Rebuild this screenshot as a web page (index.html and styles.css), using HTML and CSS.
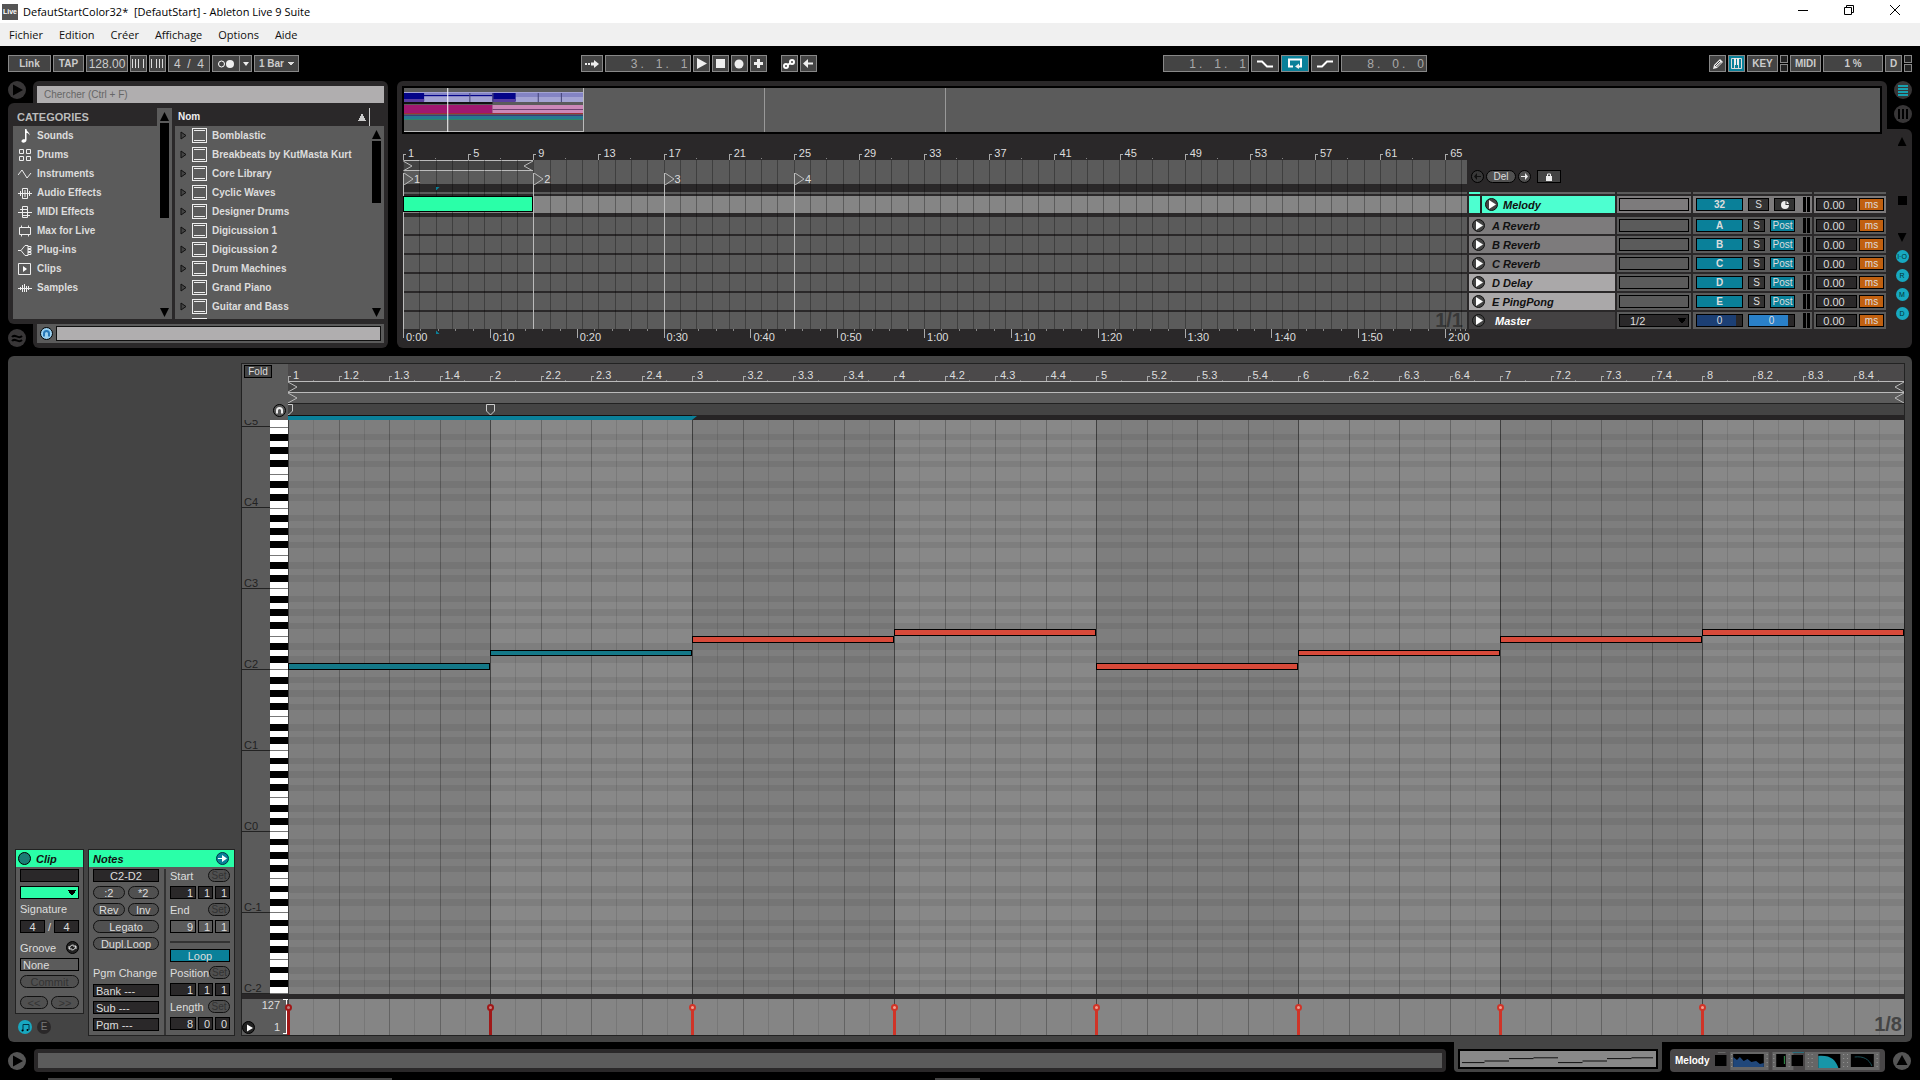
FILE: index.html
```
<!DOCTYPE html>
<html lang="fr">
	<head>
		<meta charset="utf-8">
		<title>DefautStartColor32* [DefautStart] - Ableton Live 9 Suite</title>
		<link rel="stylesheet" href="styles.css">
	</head>
	<body>
		<header class="titlebar">
			<span class="app-icon">Live</span>
			<span class="title">DefautStartColor32*&nbsp; [DefautStart] - Ableton Live 9 Suite</span>
			<div class="window-buttons">
				<button aria-label="Minimize"><svg width="12" height="12"><path d="M1 6.500h10"/></svg></button>
				<button aria-label="Restore"><svg width="12" height="12"><path d="M1.500 3.500h7v7h-7zM3.500 3.500v-2h7v7h-2"/></svg></button>
				<button aria-label="Close"><svg width="12" height="12"><path d="M1 1l10 10M11 1L1 11"/></svg></button>
			</div>
		</header>

		<nav class="menu">
			<a href="#">Fichier</a>
			<a href="#">Edition</a>
			<a href="#">Créer</a>
			<a href="#">Affichage</a>
			<a href="#">Options</a>
			<a href="#">Aide</a>
		</nav>

		<!-- transport -->
		<div class="transport">
			<div class="group tempo">
				<button class="tb w43">Link</button>
				<button class="tb w31">TAP</button>
				<input class="tb w42 num" value="128.00" aria-label="Tempo">
				<button class="tb w17" aria-label="Nudge down"><svg width="13" height="9"><path class="line" d="M.5 0v9M3.500 0v9M6.500 0v9M11.500 0v9"/></svg></button>
				<button class="tb w17" aria-label="Nudge up"><svg width="13" height="9"><path class="line" d="M.5 0v9M5.500 0v9M8.500 0v9M11.500 0v9"/></svg></button>
				<input class="tb w42 num" value="4 &nbsp;/ &nbsp;4" aria-label="Time signature">
				<div class="joined">
					<button class="tb w28" aria-label="Metronome"><svg width="18" height="10"><circle class="ring" cx="4.500" cy="5" r="3"/><circle cx="13" cy="5" r="4"/></svg></button>
					<button class="tb w12" aria-label="Metronome options"><svg width="6" height="4"><path d="M0 0h6L3 4z"/></svg></button>
				</div>
				<select class="tb w45 bar-select" aria-label="Quantization"><option>1 Bar</option></select>
			</div>

			<div class="group play">
				<button class="tb w22" aria-label="Follow"><svg width="14" height="9"><path d="M0 4h2v2H0zM3 4h2v2H3zM6 3.500h3V1l5 4-5 4V6.500H6z"/></svg></button>
				<div class="tb w86 counter"><span>3<i>.</i></span><span>1<i>.</i></span><span>1</span></div>
				<button class="tb w17" aria-label="Play"><svg width="11" height="11"><path d="M1 0l10 5.500L1 11z"/></svg></button>
				<button class="tb w17" aria-label="Stop"><svg width="9" height="9"><path d="M0 0h9v9H0z"/></svg></button>
				<button class="tb w17" aria-label="Record"><svg width="10" height="10"><circle cx="5" cy="5" r="4.500"/></svg></button>
				<button class="tb w17" aria-label="Overdub"><svg width="9" height="9"><path d="M3 0h3v3h3v3H6v3H3V6H0V3h3z"/></svg></button>
				<button class="tb w17 spaced" aria-label="Automation arm"><svg width="12" height="10"><circle class="ring2" cx="3" cy="7" r="2"/><circle class="ring2" cx="9" cy="3" r="2"/><path class="ring2" d="M4.500 6l3-2"/></svg></button>
				<button class="tb w17" aria-label="Re-enable automation"><svg width="10" height="9"><path d="M0 4.500L5 0v3.500h5v2H5V9z"/></svg></button>
			</div>

			<div class="group loop">
				<div class="tb w86 counter"><span>1<i>.</i></span><span>1<i>.</i></span><span>1</span></div>
				<button class="tb w28" aria-label="Punch in"><svg width="16" height="8"><path class="thick" d="M0 1.500h5l5 5h6"/></svg></button>
				<button class="tb w28 on" aria-label="Loop"><svg width="14" height="11"><path class="thick" d="M5 8.500H1v-7h12v7H9"/><path d="M7 8.500l4-3v5.500z"/></svg></button>
				<button class="tb w28" aria-label="Punch out"><svg width="16" height="8"><path class="thick" d="M0 6.500h5l5-5h6"/></svg></button>
				<div class="tb w86 counter"><span>8<i>.</i></span><span>0<i>.</i></span><span>0</span></div>
			</div>

			<div class="group status-group">
				<button class="tb w17" aria-label="Draw mode"><svg width="12" height="12"><path d="M1 11l1-4 6-6 3 3-6 6z"/><path class="cut" d="M3 8l5-5M4.500 9L9 4.500"/></svg></button>
				<button class="tb w17 on" aria-label="Computer MIDI keyboard"><svg width="11" height="11"><path class="line" d="M.5.5h10v10H.5zM3.500 0v11M7.500 0v11"/><path d="M3 0h2v7H3zM6 0h2v7H6z"/></svg></button>
				<button class="tb w31">KEY</button>
				<div class="leds"><i></i><i></i></div>
				<button class="tb w31">MIDI</button>
				<div class="tb w60">1 %</div>
				<button class="tb w17">D</button>
				<div class="leds"><i></i><i></i></div>
			</div>
		</div>

		<div class="upper">
			<!-- browser -->
			<section class="browser">
				<div class="browser-top">
					<button class="round" aria-label="Show browser"><svg width="18" height="18"><path d="M5 3.500l10 5.500-10 5.500z"/></svg></button>
					<div class="search-box"><input type="search" placeholder="Chercher (Ctrl + F)" aria-label="Chercher"></div>
				</div>
				<div class="browser-body">
					<div class="categories">
						<div class="cat-main">
							<h2>CATEGORIES</h2>
							<ul>
								<li><svg width="14" height="14"><path class="f" d="M7 0h1.500c0 3 3.500 3 3 6.500-.5-2-2-2.500-3-2.500v7c0 3-5 3.500-5 1.200C3.500 10.500 5.500 10 7 10.300z"/></svg>Sounds</li>
								<li><svg width="14" height="14"><path d="M1.500 1.500h4v4h-4zM8.500 1.500h4v4h-4zM1.500 8.500h4v4h-4zM8.500 8.500h4v4h-4z"/></svg>Drums</li>
								<li><svg width="14" height="14"><path d="M0 8l4-5 5 8 4-5"/></svg>Instruments</li>
								<li><svg width="14" height="14"><path d="M0 7.500h14M4.500 2.500h5v10h-5zM2.500 5v5M7 4v7M11.500 5v5"/></svg>Audio Effects</li>
								<li><svg width="14" height="14"><path d="M4.500 1.500h5v11h-5zM2 4.500h8M0 7.500h14M4 10.500h8"/></svg>MIDI Effects</li>
								<li><svg width="14" height="14"><path d="M1.500 3.500h11v7h-11zM3.500 1.500v2M10.500 1.500v2M3.500 10.500v2M10.500 10.500v2"/></svg>Max for Live</li>
								<li><svg width="14" height="14"><path d="M0 7.500h3l4-5h3v10H7l-4-5M10 3.500h3v2h-3M10 6.500h3v2h-3M10 9.500h3v2h-3"/></svg>Plug-ins</li>
								<li><svg width="14" height="14"><path d="M.5 1.500h12v11H.5z"/><path class="f" d="M5 4l4 3-4 3z"/></svg>Clips</li>
								<li><svg width="14" height="14"><path d="M0 7.500h14M2.500 6v3M4.500 4v7M6.500 3v8M8.500 5v6M10.500 5v4"/></svg>Samples</li>
							</ul>
						</div>
						<div class="scroll"><i class="up"></i><b></b><i class="down"></i></div>
					</div>
					<div class="packs">
						<h2>Nom<i class="sort"></i></h2>
						<div class="pack-main">
							<ul id="packs"></ul>
							<div class="scroll small"><i class="up"></i><b></b><i class="down"></i></div>
						</div>
					</div>
				</div>
				<div class="browser-foot">
					<button class="round" aria-label="Groove pool"><svg width="18" height="18"><path class="wave" d="M4 8c3-4 6 3 10-1M4 12c3-4 6 3 10-1"/></svg></button>
					<div class="preview-box"><div>
						<button class="phones blue" aria-label="Preview"><svg width="11" height="11"><path d="M3 8.500V5.500a2.500 2.500 0 0 1 5 0v3"/></svg></button>
						<input aria-label="Preview clip">
					</div></div>
				</div>
			</section>

			<!-- arrangement -->
			<section class="arrangement">
				<div class="overview">
					<div class="song">
						<svg viewBox="0 0 179 44" preserveAspectRatio="none">
							<path fill="#a4a4d4" d="M0 4h179v10H0z"/>
							<path fill="#8484c4" d="M0 5h179v4H0z"/>
							<path fill="#040488" d="M0 5h20v8H0zM88 5h23v8H88zM20 7h68v1H20z"/>
							<path fill="#5a3fa0" d="M0 11h20v3H0zM88 11h23v3H88z"/>
							<path fill="#444478" d="M65 5h1v9h-1zM88 5h1v9h-1zM133 5h1v9h-1zM156 5h1v9h-1z"/>
							<path fill="#111" d="M0 14h88v2H0z"/>
							<path fill="#a01870" d="M0 17h88v8H0z"/>
							<path fill="#cc88b8" d="M88 17h91v8H88z"/>
							<path fill="#704070" d="M88 21h91v1H88z"/>
							<path fill="#a03038" d="M0 25h179v1H0z"/>
							<path fill="#3c3c78" d="M0 27h179v1H0z"/>
							<path fill="#287890" d="M0 28h179v3H0z"/>
							<path fill="#28886c" d="M0 31h179v1H0z"/>
							<path fill="#bbb" d="M0 43h179v1H0zM178 0h1v44h-1z"/>
							<path fill="#fff" d="M43 0h1v44h-1z"/>
						</svg>
					</div>
					<div class="page"></div>
					<div class="page"></div>
				</div>
				<div class="arr-body">
					<div class="timeline">
						<div class="bar-ruler" id="bar-ruler"></div>
						<div class="locators">
							<div class="loop-brace brace"><svg width="10" height="10"><path d="M0 0l9 5-9 5"/></svg><svg width="10" height="10"><path d="M10 0L1 5l9 5"/></svg></div>
						</div>
						<div class="lanes">
							<div class="lane cut"></div>
							<div class="lane main"><div class="clip"></div></div>
							<div class="lane"></div>
							<div class="lane"></div>
							<div class="lane"></div>
							<div class="lane"></div>
							<div class="lane"></div>
							<div class="lane"><span class="grid-size">1/1</span></div>
						</div>
						<div class="time-ruler" id="time-ruler"></div>
						<div class="bar-grid" id="bar-grid"></div>
						<div class="markers" id="markers"></div>
						<div class="insert-point"><i></i><i></i></div>
					</div>
					<div class="headers">
						<div class="locator-tools">
							<button class="pill dim" aria-label="Previous locator"><svg width="7" height="7"><path d="M0 3.500L3 0v3h4v1H3v3z"/></svg></button>
							<button class="pill del">Del</button>
							<button class="pill" aria-label="Next locator"><svg width="7" height="7"><path d="M7 3.500L4 0v3H0v1h4v3z"/></svg></button>
							<button class="lock" aria-label="Lock envelopes"><svg width="8" height="8"><path d="M1 3h6v5H1z"/><path class="o" d="M2.500 3V1h3v2"/></svg></button>
						</div>
						<div class="track cut"><div class="name"></div><div></div><div></div><div></div></div>
						<div id="tracks"></div>
					</div>
				</div>
			</section>

			<aside class="side">
				<div class="views">
					<button class="round on" aria-label="Arrangement view"><svg width="18" height="18"><path d="M4 5h10M4 8h10M4 11h10M4 14h10"/></svg></button>
					<button class="round" aria-label="Session view"><svg width="18" height="18"><path d="M5 4v10M9 4v10M13 4v10"/></svg></button>
				</div>
				<div class="side-body">
					<i class="up"></i>
					<i class="block"></i>
					<i class="down"></i>
					<button>I·O</button>
					<button>R</button>
					<button>M</button>
					<button>D</button>
				</div>
			</aside>
		</div>

		<!-- clip view -->
		<section class="detail">
			<div class="clip-boxes">
				<div class="clip-col">
					<div class="box">
						<h3><button class="dot" aria-label="Clip active"></button>Clip</h3>
						<div class="fields">
							<input aria-label="Clip name">
							<select class="color" aria-label="Clip color"><option></option></select>
							<span>Signature</span>
							<div class="sig"><input value="4" aria-label="Numerator">/<input value="4" aria-label="Denominator"></div>
							<div class="groove"><span>Groove</span><button class="dot dark" aria-label="Hot-swap groove"><svg width="9" height="9"><path d="M1.500 6c0-3 1.500-4 4-4M7.500 3c0 3-1.500 4-4 4M1 3v3h3M8 6V3H5"/></svg></button></div>
							<select class="none" aria-label="Groove"><option>None</option></select>
							<button class="pill off">Commit</button>
							<div class="pair nudge"><button class="pill off">&lt;&lt;</button><button class="pill off">&gt;&gt;</button></div>
						</div>
					</div>
					<div class="toggles">
						<button class="teal" aria-label="Notes box"><svg width="9" height="9"><path d="M2 8V1.500h6V7"/><circle cx="1.500" cy="7.500" r="1"/><circle cx="6.500" cy="7" r="1"/></svg></button>
						<button>E</button>
					</div>
				</div>
				<div class="box notes">
					<h3>Notes<button class="dot teal" aria-label="Show envelopes"><svg width="9" height="9"><path d="M0 4h4V1l5 3.500L4 8V5H0z"/></svg></button></h3>
					<div class="note-cols">
						<div class="fields left">
							<input class="center" value="C2-D2" aria-label="Note range">
							<div class="pair"><button class="pill">:2</button><button class="pill">*2</button></div>
							<div class="pair"><button class="pill">Rev</button><button class="pill">Inv</button></div>
							<button class="pill">Legato</button>
							<button class="pill">Dupl.Loop</button>
							<span class="pgm">Pgm Change</span>
							<input value="Bank ---" aria-label="Bank">
							<input value="Sub ---" aria-label="Sub">
							<input value="Pgm ---" aria-label="Program">
						</div>
						<div class="fields right">
							<div class="set"><span>Start</span><button class="pill off">Set</button></div>
							<div class="pos"><input value="1" aria-label="Start bar"><input value="1" aria-label="Start beat"><input value="1" aria-label="Start sixteenth"></div>
							<div class="set"><span>End</span><button class="pill off">Set</button></div>
							<div class="pos light"><input value="9" aria-label="End bar"><input value="1" aria-label="End beat"><input value="1" aria-label="End sixteenth"></div>
							<hr>
							<button class="loop-on">Loop</button>
							<div class="set"><span>Position</span><button class="pill off">Set</button></div>
							<div class="pos"><input value="1" aria-label="Position bar"><input value="1" aria-label="Position beat"><input value="1" aria-label="Position sixteenth"></div>
							<div class="set"><span>Length</span><button class="pill off">Set</button></div>
							<div class="pos"><input value="8" aria-label="Length bars"><input value="0" aria-label="Length beats"><input value="0" aria-label="Length sixteenths"></div>
						</div>
					</div>
				</div>
			</div>

			<div class="roll">
				<div class="roll-corner">
					<button class="fold">Fold</button>
					<button class="phones" aria-label="Preview notes"><svg width="11" height="11"><path d="M3 8.500V5.500a2.500 2.500 0 0 1 5 0v3"/></svg></button>
				</div>
				<div class="roll-top">
					<div class="beat-ruler" id="beat-ruler"></div>
					<div class="brace"><svg width="10" height="10"><path d="M0 0l9 5-9 5"/></svg><svg width="10" height="10"><path d="M10 0L1 5l9 5"/></svg></div>
					<div class="brace start"><svg width="10" height="10"><path d="M0 0l9 5-9 5"/></svg><svg width="10" height="10"><path d="M10 0L1 5l9 5"/></svg></div>
					<div class="insert" id="insert"></div>
					<div class="selection"><i></i><b></b></div>
				</div>
				<div class="keyboard">
					<div class="octaves" id="octaves"></div>
					<div class="keys" id="keys"></div>
				</div>
				<div class="note-area">
					<div class="bars" id="bars"></div>
					<div class="rows" id="rows"></div>
					<div class="notes-layer" id="notes"></div>
				</div>
				<div class="vel-label">
					<span>127</span>
					<div><button class="dot dark" aria-label="Envelope"><svg width="10" height="10"><path d="M3 1.500l6 3.500-6 3.500z"/></svg></button><span>1</span></div>
				</div>
				<div class="velocity" id="velocity"></div>
			</div>
		</section>

		<footer class="statusbar">
			<button class="round light" aria-label="Show info view"><svg width="18" height="18"><path d="M5 3.500l10 5.500-10 5.500z"/></svg></button>
			<div class="info"><div></div></div>
			<div class="clip-tab">
				<svg viewBox="0 0 200 20" preserveAspectRatio="none"><path d="M2 14.500h23M25 12.500h25M50 9.500h25M75 8.500h25M100 14.500h25M125 12.500h25M150 9.500h25M175 8.500h22"/></svg>
			</div>
			<div class="device-tab">
				<span>Melody</span>
				<svg viewBox="0 0 172 18" preserveAspectRatio="none">
					<path fill="#666" d="M3 0h8v1H3zM16 0h40v18H16zM60 0h22v18H60zM94 0h78v18H94z"/>
					<path fill="#2a7080" d="M81 0h12v1H81z"/>
					<path fill="#000" d="M0 3h12v11H0zM19 2h32v13H19zM64 2h10v13H64zM80 3h12v11H80zM108 2h23v14h-23zM142 2h24v13h-24z"/>
					<path fill="#20477a" d="M19 15V5l4 3 3-3 4 4 4-2 4 3 5-1 4 3 4-1v4z"/>
					<path fill="#35a050" d="M72 4h1v8h-1z"/>
					<path fill="#1896a8" d="M108 16V4c13-1 18 4 21 12z"/>
					<path fill="none" stroke="#1a5058" d="M146 5c9-1 15 2 18 9"/>
					<path fill="none" stroke="#999" stroke-dasharray="1 3" d="M17.500 2v14M54.500 2v14M61.500 2v14M77.500 2v14M97.500 2v14M101.500 2v14M134.500 2v14M138.500 2v14M169.500 2v14"/>
				</svg>
			</div>
			<button class="round light" aria-label="Show detail view"><svg width="18" height="18"><path d="M9 3l5.500 10h-11z"/></svg></button>
		</footer>
		<div class="edge"><i></i><i></i></div>

		<script src="script.js"></script>
	</body>
</html>
```
FILE: styles.css
```
*, *:before, *:after {
  box-sizing: border-box;
}

:root {
  --bars: 65.33;
  --panel: #2a2829;
  --grey: #5b5b5b;
  --teal: #0a8099;
  --green: #2affa8;
}

body {
  margin: 0;
  height: 100vh;
  display: flex;
  flex-direction: column;
  background: #000;
  color: #ddd;
  font-family: "Liberation Sans", Arial, sans-serif;
  font-size: 10px;
  line-height: 12px;
  overflow: hidden;
}

h2, h3, ul {
  margin: 0;
  padding: 0;
  font-size: 10px;
  list-style: none;
}

button, input, select {
  margin: 0;
  padding: 0;
  border: 0;
  border-radius: 0;
  min-width: 0;
  font: inherit;
  color: inherit;
  background: none;
  appearance: none;
}

button {
  display: flex;
  align-items: center;
  justify-content: center;
}

i {
  font-style: normal;
}

svg {
  display: block;
  flex: none;
}

/* window */
.titlebar {
  height: 23px;
  flex: none;
  display: flex;
  align-items: center;
  gap: 5px;
  padding-left: 2px;
  background: #fff;
  color: #000;
  font-family: "Open Sans", "Noto Sans", sans-serif;
  font-size: 11px;
}

.app-icon {
  width: 16px;
  height: 16px;
  background: #555;
  color: #fff;
  font: bold 7px/16px "Liberation Sans", sans-serif;
  text-align: center;
}

.window-buttons {
  margin-left: auto;
  padding-right: 2px;
  display: flex;
  align-self: flex-start;
}

.window-buttons button {
  width: 46px;
  height: 20px;
}

.window-buttons path {
  fill: none;
  stroke: #000;
}

.menu {
  height: 23px;
  flex: none;
  display: flex;
  align-items: center;
  gap: 16px;
  padding-left: 9px;
  background: #f0f0f0;
  font-family: "Open Sans", "Noto Sans", sans-serif;
  font-size: 11px;
}

.menu a {
  color: #111;
  text-decoration: none;
}

/* transport */
.transport {
  flex: none;
  display: flex;
  padding: 9px 8px;
}

.group {
  display: flex;
  gap: 2px;
}

.play {
  margin-left: 14.8%;
}

.loop {
  margin-left: 18.2%;
}

.status-group {
  margin-left: auto;
}

.tb {
  display: flex;
  align-items: center;
  justify-content: center;
  height: 17px;
  border: 1px solid #888;
  background: #444;
  color: #ccc;
  font-weight: bold;
  text-align: center;
}

.tb svg {
  fill: #eee;
}

.tb.num, .counter {
  font-size: 12px;
  font-weight: normal;
}

.tb.on {
  background: var(--teal);
}

.tb .line {
  fill: none;
  stroke: #ddd;
}

.tb .ring, .tb .thick, .tb .ring2 {
  fill: none;
  stroke: #fff;
  stroke-width: 2px;
}

.tb .ring {
  stroke-width: 1px;
}

.tb .cut {
  fill: none;
  stroke: #444;
}

.w12 { width: 12px; }
.w17 { width: 17px; }
.w22 { width: 22px; }
.w28 { width: 28px; }
.w31 { width: 31px; }
.w42 { width: 42px; }
.w43 { width: 43px; }
.w45 { width: 45px; }
.w60 { width: 60px; }
.w86 { width: 86px; }

.spaced {
  margin-left: 12px;
}

.joined {
  display: flex;
}

.joined .w12 {
  border-left: 0;
}

.bar-select {
  padding: 0 4px;
  text-align: left;
  background: conic-gradient(from -37deg at 50% 100%, #ddd 74deg, #444 0) right 4px center / 6px 4px no-repeat #444;
  background: conic-gradient(from -37deg at 50% 100%, #ddd 74deg, #444 0) right 4px center / 6px 4px no-repeat #444;
}

.counter {
  justify-content: flex-end;
  color: #aaa;
}

.counter span {
  width: 25px;
  padding-left: 4px;
  display: flex;
  gap: 3px;
}

.counter span:last-child {
  width: 13px;
}

.leds {
  width: 8px;
  display: flex;
  flex-direction: column;
  gap: 1px;
}

.leds i {
  flex: 1;
  border: 1px solid #888;
  background: #222;
}

/* round view buttons */
.round {
  width: 18px;
  height: 18px;
  flex: none;
  border-radius: 50%;
  background: #383637;
}

.round.light {
  background: #555;
}

.round .wave {
  fill: none;
  stroke: #000;
  stroke-width: 2px;
}

.upper {
  flex: none;
  display: flex;
  padding: 0 8px;
}

/* browser */
.browser {
  width: 380px;
  height: 267px;
  display: flex;
  flex-direction: column;
}

.browser-top, .browser-foot {
  display: flex;
  justify-content: space-between;
  align-items: flex-start;
}

.search-box, .preview-box {
  width: 355px;
  padding: 5px 4px 0;
  background: var(--panel);
  border-radius: 6px 6px 0 0;
}

.search-box input {
  width: 100%;
  height: 17px;
  display: block;
  padding: 0 7px;
  background: #b0aeaf;
  color: #333;
}

.search-box input::placeholder {
  color: #666;
}

.browser-body {
  flex: 1;
  min-height: 0;
  display: flex;
  gap: 3px;
  padding: 5px 4px 5px 5px;
  background: var(--panel);
  border-radius: 6px 0 0 6px;
}

.preview-box {
  height: 24px;
  padding: 0 4px 5px;
  border-radius: 0 0 6px 6px;
}

.browser-foot .round {
  margin-top: 5px;
}

.preview-box div {
  height: 19px;
  display: flex;
  align-items: center;
  gap: 3px;
  padding: 0 3px;
  background: var(--grey);
}

.preview-box input {
  flex: 1;
  height: 15px;
  border: 1px solid #111;
  background: #b0aeaf;
}

.phones {
  width: 13px;
  height: 13px;
  border: 1px solid #000;
  border-radius: 50%;
  background: #555;
}

.phones path {
  fill: none;
  stroke: #eee;
  stroke-width: 2px;
}

.phones.blue {
  background: #9ad0f0;
}

.phones.blue path {
  stroke: #2878b8;
}

.categories {
  display: flex;
}

.cat-main {
  width: 144px;
  display: flex;
  flex-direction: column;
}

.cat-main h2 {
  height: 18px;
  padding-left: 4px;
  line-height: 18px;
  font-size: 11px;
  color: #bbb;
}

.cat-main ul, .pack-main {
  flex: 1;
  background: var(--grey);
}

.browser li {
  height: 19px;
  display: flex;
  align-items: center;
  gap: 5px;
  padding-left: 5px;
  font-weight: bold;
  white-space: nowrap;
}

.cat-main li svg {
  fill: none;
  stroke: #eee;
}

.cat-main li .f {
  fill: #fff;
  stroke: none;
}

.scroll {
  width: 15px;
  display: flex;
  flex-direction: column;
  align-items: center;
  padding: 4px 0 2px;
  background: var(--grey);
}

.scroll b {
  width: 9px;
  height: 95px;
  margin-top: 2px;
  background: #000;
}

.scroll .down {
  margin-top: auto;
}

.up, .down {
  width: 9px;
  height: 9px;
  background: #000;
  clip-path: polygon(50% 0, 100% 100%, 0 100%);
}

.down {
  clip-path: polygon(0 0, 100% 0, 50% 100%);
}

.packs {
  flex: 1;
  display: flex;
  flex-direction: column;
}

.packs h2 {
  height: 18px;
  padding: 0 14px 0 3px;
  display: flex;
  align-items: center;
  justify-content: space-between;
  color: #eee;
}

.sort {
  width: 12px;
  height: 18px;
  border-right: 1px solid #ccc;
  background: conic-gradient(from 153deg at 50% 0, #ccc 54deg, transparent 0) 0 5px / 8px 8px no-repeat;
}

.pack-main {
  min-height: 0;
  display: flex;
  justify-content: space-between;
  overflow: hidden;
}

.pack-main .scroll b {
  height: 62px;
}

.tri {
  fill: #444;
  stroke: #111;
}

.pack {
  width: 15px;
  height: 15px;
  border: 1px solid #eee;
  padding: 1px;
}

.pack:before {
  content: "";
  display: block;
  height: 11px;
  border: solid #eee;
  border-width: 1px 0;
}

#packs li {
  gap: 5px;
}

/* arrangement */
.arrangement {
  flex: 1;
  height: 267px;
  margin-left: 9px;
  padding: 5px 1px 0 5px;
  background: var(--panel);
  border-radius: 6px 6px 0 6px;
}

.overview {
  height: 48px;
  margin-right: 4px;
  display: flex;
  border: 2px solid #000;
  background: var(--grey);
}

.song svg {
  width: 180px;
  height: 44px;
}

.page {
  width: 181px;
  border-right: 1px solid #999;
}

.arr-body {
  display: flex;
  gap: 2px;
  padding-left: 1px;
}

.timeline {
  flex: 1;
  min-width: 0;
  position: relative;
}

.bar-ruler {
  height: 26px;
  padding-top: 12px;
  display: flex;
  overflow: hidden;
}

.bar-ruler span {
  flex: 0 0 calc(100% * 4 / var(--bars));
  padding-left: 5px;
  font-size: 11px;
  line-height: 14px;
  background: linear-gradient(#aaa, #aaa) 0 8px / 1px 6px no-repeat, linear-gradient(#aaa, #aaa) 0 8px / 3px 1px no-repeat, linear-gradient(#888, #888) 50% 12px / 1px 1px no-repeat;
}

.locators {
  height: 24px;
  background: var(--grey);
}

.lanes {
  padding-top: 8px;
}

.lane {
  height: 17px;
  margin-bottom: 2px;
  background: var(--grey);
}

.lane.cut {
  height: 2px;
}

.lane.main {
  margin-bottom: 4px;
  background: #858585;
}

.lane:last-child {
  display: flex;
  justify-content: flex-end;
  margin-bottom: 0;
}

.clip {
  width: calc(100% * 8 / var(--bars));
  height: 16px;
  border: 1px solid #000;
  background: var(--green);
  position: relative;
  z-index: 2;
}

.grid-size {
  font-size: 20px;
  line-height: 17px;
  font-weight: bold;
  color: #383838;
  padding-right: 4px;
}

.time-ruler {
  height: 19px;
  display: flex;
}

.time-ruler span {
  flex: 0 0 calc(100% * 5.333 / var(--bars));
  padding: 2px 0 0 3px;
  font-size: 11px;
  white-space: nowrap;
  background: linear-gradient(#aaa, #aaa) 0 0 / 1px 9px no-repeat, repeating-linear-gradient(90deg, #888 0 1px, transparent 1px 20%) 0 0 / 100% 2px no-repeat;
}

.time-ruler span:last-child {
  flex-basis: 0;
  margin-right: auto;
}

.bar-grid {
  position: absolute;
  inset: 26px 0 19px;
  display: flex;
  overflow: hidden;
}

.bar-grid i {
  flex: 0 0 calc(100% / var(--bars));
  border-left: 1px solid rgba(0, 0, 0, .3);
}

.markers {
  position: absolute;
  inset: 39px 0 19px;
}

.marker {
  position: absolute;
  top: 0;
  bottom: 0;
  display: flex;
  border-left: 1px solid #bbb;
  font-size: 11px;
}

.marker svg, .brace svg {
  fill: none;
  stroke: #bbb;
}

/* edit cursor, two bars in */
.insert-point {
  position: absolute;
  left: calc(100% * 2 / var(--bars));
  top: 53px;
  bottom: 14px;
  display: flex;
  flex-direction: column;
  justify-content: space-between;
}

.insert-point i {
  width: 4px;
  height: 4px;
  background: var(--teal);
  clip-path: polygon(0 0, 100% 0, 0 100%);
}

.insert-point i + i {
  clip-path: polygon(0 0, 100% 100%, 0 100%);
}

.headers {
  flex: 0 0 417px;
}

.locator-tools {
  height: 58px;
  padding: 36px 0 0 2px;
  display: flex;
  gap: 2px;
}

.pill {
  min-width: 13px;
  height: 13px;
  border: 1px solid #111;
  border-radius: 7px;
  background: #505050;
}

.locator-tools .pill {
  border-color: #000;
}

.pill svg, .lock svg {
  fill: #eee;
}

.pill.dim svg {
  fill: #111;
}

.pill.dim {
  background: #383838;
}

.pill.del {
  width: 30px;
}

.lock {
  width: 24px;
  height: 13px;
  margin-left: 4px;
  border: 1px solid #000;
  background: #444;
}

.lock .o {
  fill: none;
  stroke: #eee;
}

.track {
  display: grid;
  grid-template-columns: 146px 74px 119px 72px;
  gap: 2px;
  height: 17px;
  margin-bottom: 2px;
}

.track.cut {
  height: 2px;
}

.track.cut .name {
  background: linear-gradient(90deg, #4dffd0 11px, #666 0);
}

.track > div {
  display: flex;
  align-items: center;
  background: var(--grey);
}

.track .name {
  padding-left: 3px;
  gap: 7px;
  background: #7d7b7c;
  color: #111;
  font-size: 11px;
  font-weight: bold;
  font-style: italic;
}

.track .name.pale {
  background: #aaa8a9;
}

.track .name.dark {
  gap: 10px;
  background: #444243;
  color: #fff;
}

.track .name.green {
  padding-left: 16px;
  gap: 5px;
  background: linear-gradient(90deg, #4dffd0 11px, #222 0 13px, #4dffd0 0);
}

.track.first {
  margin-bottom: 4px;
}

.track.first > div:not(.name) {
  background: #7d7b7c;
}

.launch {
  width: 13px;
  height: 13px;
  border-radius: 50%;
  border: 1px solid #111;
  background: #444;
}

.launch svg {
  fill: #fff;
}

.track .io input, .track .io select {
  width: 70px;
  height: 13px;
  margin: 0 2px;
  border: 1px solid #000;
}

.track .io select {
  padding-left: 10px;
  background: conic-gradient(from -37deg at 50% 100%, #000 74deg, #2a2829 0) right 2px center / 8px 6px no-repeat #2a2829;
  font-size: 11px;
}

.track .mix {
  padding: 0 2px 0 3px;
}

.mix button, .mix input, .delay input, .delay button {
  height: 13px;
  border: 1px solid #000;
  text-align: center;
}

.mix .act {
  width: 47px;
  background: var(--teal);
  font-weight: bold;
}

.mix .solo {
  width: 17px;
  margin-left: 5px;
  background: #333;
}

.mix .post {
  width: 25px;
  margin-left: 5px;
  background: var(--teal);
}

.mix .arm {
  width: 21px;
  margin-left: 5px;
  background: #333;
}

.first .solo {
  width: 21px;
}

.first .arm svg {
  fill: #eee;
}

.mix .vol {
  width: 47px;
  background: linear-gradient(90deg, #1c3f74 39px, #2a2829 0);
}

.mix .vol.cue {
  margin-left: 5px;
  background: linear-gradient(90deg, #2a80c8 39px, #2a2829 0);
}

.meter {
  width: 7px;
  height: 15px;
  margin-left: auto;
  border: solid #000;
  border-width: 0 3px;
}

.track .delay {
  padding: 0 2px;
  justify-content: space-between;
}

.delay input {
  width: 41px;
  padding-right: 5px;
  background: #2a2829;
  font-size: 11px;
}

.delay button {
  width: 25px;
  background: #c06010;
}

.side {
  width: 25px;
  display: flex;
  flex-direction: column;
}

.views {
  height: 48px;
  display: flex;
  flex-direction: column;
  align-items: flex-end;
  gap: 6px;
}

.views path {
  stroke: #000;
  stroke-width: 2px;
}

.views .on path {
  stroke: #18a0b0;
}

.side-body {
  flex: 1;
  display: flex;
  flex-direction: column;
  align-items: center;
  padding: 8px 0 0 5px;
  background: var(--panel);
  border-radius: 0 6px 6px 0;
}

.side-body button {
  width: 13px;
  height: 13px;
  margin-bottom: 6px;
  border-radius: 50%;
  background: #18a8c0;
  color: #033;
  font-size: 7px;
}

.side-body .block {
  width: 9px;
  height: 9px;
  margin: 50px 0 28px;
  background: #000;
}

.side-body .down {
  margin-bottom: 8px;
}

/* clip view */
.detail {
  flex: 1;
  min-height: 0;
  margin: 8px 8px 0;
  padding: 7px 7px 6px;
  display: flex;
  gap: 6px;
  background: #444;
  border-radius: 6px;
}

.clip-boxes {
  width: 220px;
  display: flex;
  align-items: flex-end;
  gap: 4px;
}

.box {
  border: 1px solid #222;
  background: var(--grey);
}

.box h3 {
  height: 17px;
  padding: 0 5px 0 2px;
  display: flex;
  align-items: center;
  gap: 5px;
  background: var(--green);
  color: #111;
  font-size: 11px;
  font-style: italic;
}

.clip-col {
  width: 69px;
}

.notes {
  width: 147px;
}

.notes h3 {
  padding-left: 4px;
  justify-content: space-between;
}

.dot {
  width: 13px;
  height: 13px;
  border: 1px solid #000;
  border-radius: 50%;
  background: #1b7c74;
}

.dot.teal {
  background: var(--teal);
  border-color: #034;
}

.dot.teal svg {
  fill: #fff;
}

.dot.dark {
  background: #222;
}

.dot.dark path {
  fill: none;
  stroke: #ddd;
}

.fields {
  display: flex;
  flex-direction: column;
  gap: 4px;
  padding: 2px 4px 4px;
  font-size: 11px;
}

.fields input, .fields select {
  width: 100%;
  height: 13px;
  padding: 0 2px;
  border: 1px solid #000;
  background: #2a2829;
  font-size: 11px;
}

.fields > span {
  height: 13px;
}

.fields .center, .fields .sig input {
  text-align: center;
}

.fields select.color {
  background: conic-gradient(from -37deg at 50% 100%, #000 74deg, transparent 0) right 2px center / 8px 6px no-repeat, var(--green);
}

.fields select.none {
  background: var(--grey);
}

.sig, .pair, .pos, .set, .groove {
  height: 13px;
  display: flex;
  justify-content: space-between;
  align-items: center;
  gap: 3px;
}

.groove, .nudge {
  margin-top: 4px;
}

.fields .pair .pill {
  flex: 1;
}

.pill.off {
  color: #333;
}

.toggles {
  height: 22px;
  display: flex;
  gap: 5px;
  padding: 6px 0 0 3px;
}

.toggles button {
  width: 14px;
  height: 14px;
  border-radius: 50%;
  background: #2a2829;
  color: #777;
}

.toggles .teal {
  background: #18a8c0;
}

.toggles path {
  fill: none;
  stroke: #034;
}

.note-cols {
  display: grid;
  grid-template-columns: 75px 70px;
}

.fields.left {
  padding-right: 5px;
}

.fields.right {
  margin-top: 2px;
  padding-top: 0;
  padding-left: 4px;
  border-left: 2px solid #333;
}

.left .pgm {
  margin-top: 13px;
}

.set .pill {
  width: 22px;
  font-size: 10px;
}

.fields .set {
  gap: 0;
}

.fields .pos {
  gap: 2px;
}

.fields .pos input {
  width: 15px;
  text-align: right;
}

.fields .pos input:first-child {
  flex: 1;
}

.fields .pos.light input {
  background: var(--grey);
}

.fields hr {
  width: 100%;
  height: 2px;
  margin: 4px 0 2px;
  border: 0;
  background: #333;
}

.loop-on {
  height: 13px;
  border: 1px solid #000;
  background: var(--teal);
}

/* piano roll */
.roll {
  flex: 1;
  min-width: 0;
  display: grid;
  grid-template-columns: 46px minmax(0, 1fr);
  grid-template-rows: 56px minmax(0, 1fr) 41px;
  border: 1px solid #222;
}

.roll-corner {
  display: flex;
  flex-direction: column;
  justify-content: space-between;
  align-items: flex-end;
  padding: 1px 2px 3px;
  background: var(--grey);
}

.fold {
  width: 28px;
  height: 13px;
  align-self: flex-start;
  border: 1px solid #000;
  background: #444;
}

.roll-top {
  display: flex;
  flex-direction: column;
  background: #444;
}

.beat-ruler {
  height: 17px;
  flex: none;
  display: flex;
  padding-top: 4px;
  background: #4b494a;
}

.beat-ruler span {
  flex: 1 1 0;
  padding-left: 5px;
  font-size: 11px;
  line-height: 14px;
  background: linear-gradient(#aaa, #aaa) 0 8px / 1px 6px no-repeat, linear-gradient(#aaa, #aaa) 0 8px / 3px 1px no-repeat, linear-gradient(#888, #888) 50% 12px / 1px 1px no-repeat;
}

.brace {
  height: 11px;
  flex: none;
  display: flex;
  justify-content: space-between;
  border: solid #bbb;
  border-width: 1px 0 0;
}

.brace.start {
  height: 12px;
  border-width: 1px 0 1px;
  border-bottom-color: #222;
  background: var(--grey);
}

.loop-brace {
  width: calc(100% * 8 / var(--bars));
  border-width: 1px 0;
  background: #444;
}

.insert {
  height: 11px;
  flex: none;
  display: flex;
  overflow: hidden;
}

.insert span {
  flex: 1 1 0;
}

.insert svg {
  margin-left: -4px;
  fill: none;
  stroke: #ccc;
}

.selection {
  flex: 1;
  display: flex;
  background: #262425;
}

.selection i {
  width: 25%;
  border-top: 1px solid #111;
  background: var(--teal);
}

.selection b {
  width: 5px;
  background: var(--teal);
  clip-path: polygon(0 20%, 100% 20%, 0 100%);
}

.keyboard {
  display: grid;
  grid-template-columns: 28px 18px;
  grid-template-rows: minmax(0, 1fr);
  background: var(--grey);
}

.octaves, .keys, .rows {
  display: flex;
  flex-direction: column;
}

.octaves span {
  flex: 12 1 0;
  min-height: 0;
  display: flex;
  align-items: flex-end;
  padding-left: 2px;
  box-shadow: inset 0 -1px #222;
  color: #222;
  font-size: 11px;
  line-height: 12px;
  overflow: hidden;
}

.octaves span:first-child {
  flex-grow: 1;
}

.keys i {
  flex: 1 1 0;
  background: #fff;
}

.keys .black {
  background: #000;
}

.keys .split {
  border-bottom: 1px solid #777;
}

.note-area {
  position: relative;
}

.bars, .rows, .notes-layer {
  position: absolute;
  inset: 0;
}

.bars, .velocity {
  display: flex;
}

.bar {
  flex: 1 1 0;
  display: flex;
  position: relative;
  background: #7e7e7e;
}

.bar:nth-child(even) {
  background: #888;
}

.bar i {
  flex: 1 1 0;
  border-left: 1px solid rgba(0, 0, 0, .1);
}

.bar i:nth-child(odd) {
  border-left-color: rgba(0, 0, 0, .25);
}

.bar i:first-child {
  border-left-color: rgba(0, 0, 0, .5);
}

.rows i {
  flex: 1 1 0;
}

.rows .black {
  background: rgba(0, 0, 0, .07);
}

.notes-layer {
  display: grid;
  grid-template-columns: repeat(8, minmax(0, 1fr));
  grid-template-rows: repeat(85, minmax(0, 1fr));
}

.note {
  border: 1px solid #000;
  background: #d84a3a;
}

.note.selected {
  background: #147888;
}

.vel-label {
  display: flex;
  flex-direction: column;
  justify-content: space-between;
  padding: 0 4px 1px 0;
  border-top: 5px solid #2a2829;
  background: var(--grey) linear-gradient(#fff, #fff) right 1px / 1px 34px no-repeat;
  background: linear-gradient(#fff, #fff) right 1px top / 1px 34px no-repeat, linear-gradient(#fff, #fff) right 0 top 0 / 5px 1px no-repeat, linear-gradient(#fff, #fff) right 0 top 34px / 5px 1px no-repeat, var(--grey);
  font-size: 11px;
  text-align: right;
}

.vel-label span {
  margin-right: 4px;
}

.vel-label div {
  display: flex;
  justify-content: space-between;
}

.vel-label .dot path {
  fill: #fff;
  stroke: none;
}

.velocity {
  border-top: 5px solid #2a2829;
}

.velocity .bar {
  background: #858585;
}

.stick {
  position: absolute;
  z-index: 1;
  top: 6px;
  bottom: 0;
  left: -1px;
  width: 3px;
  background: #d03428;
}

.stick:before {
  content: "";
  position: absolute;
  left: -2px;
  top: -1px;
  width: 7px;
  height: 7px;
  border: 2px solid #d03428;
  border-radius: 50%;
  background: #f0a090;
}

.stick.selected, .stick.selected:before {
  background-color: #a01818;
  border-color: #a01818;
}

.stick.selected:before {
  background-color: #c08080;
}

.velocity .grid-size {
  position: absolute;
  right: 0;
  bottom: 2px;
  padding-right: 2px;
  color: #444;
}

/* bottom */
.statusbar {
  flex: none;
  height: 36px;
  display: flex;
  gap: 8px;
  padding: 0 9px 0 8px;
}

.statusbar .round {
  margin-top: 10px;
}

.info {
  flex: 1;
  height: 23px;
  margin: 7px 0 0;
  padding: 4px;
  border-radius: 4px;
  background: var(--panel);
}

.info div {
  height: 15px;
  background: var(--grey);
}

.clip-tab {
  width: 208px;
  height: 30px;
  padding: 7px 4px 0;
  border-radius: 0 0 4px 4px;
  background: #444;
}

.clip-tab svg {
  width: 200px;
  height: 20px;
  border: 2px solid #000;
  background: #888;
}

.clip-tab path {
  stroke: #000;
}

.device-tab {
  width: 215px;
  height: 23px;
  margin-top: 7px;
  padding: 0 5px;
  display: flex;
  align-items: center;
  gap: 6px;
  border-radius: 4px;
  background: #484647;
  color: #fff;
  font-weight: bold;
}

.device-tab svg {
  flex: 1;
  min-width: 0;
  height: 18px;
}

.edge {
  flex: none;
  height: 2px;
  display: flex;
  padding-left: 48px;
}

.edge i {
  width: 344px;
  background: #444;
}

.edge i + i {
  width: 45px;
  margin-left: 543px;
}
```
FILE: script.js
```
const packs = ['Bomblastic', 'Breakbeats by KutMasta Kurt', 'Core Library', 'Cyclic Waves', 'Designer Drums',
	'Digicussion 1', 'Digicussion 2', 'Drum Machines', 'Grand Piano', 'Guitar and Bass', ''];

const tracks = [
	{ name: 'Melody', act: '32', look: 'green' },
	{ name: 'A Reverb', act: 'A', look: '' },
	{ name: 'B Reverb', act: 'B', look: '' },
	{ name: 'C Reverb', act: 'C', look: '' },
	{ name: 'D Delay', act: 'D', look: 'pale' },
	{ name: 'E PingPong', act: 'E', look: 'pale' },
	{ name: 'Master', look: 'dark' }
];

// semitones above C2, one note per bar
const notes = [0, 2, 4, 5, 0, 2, 4, 5];
const ROWS = 85;
const BLACK = [1, 3, 6, 8, 10];

function fill(id, html){
	document.getElementById(id).innerHTML = html;
}

function range(n){
	return Array.from({ length: n }, (_, i) => i);
}

fill('packs', packs.map(p => `<li><svg width="7" height="9"><path class="tri" d="M1 1l5 3.500L1 8z"/></svg><i class="pack"></i>${p}</li>`).join(''));

function mixer(t){
	const meter = '<i class="meter"></i>';
	if(t.look === 'dark'){
		return `<input class="vol" value="0" aria-label="Master volume"><input class="vol cue" value="0" aria-label="Cue volume">${meter}`;
	}
	const last = t.look === 'green'
		? '<button class="arm" aria-label="Arm"><svg width="8" height="8"><path d="M4 0a4 4 0 1 0 4 4H4.500V0zM5.500 0v3H8a4 4 0 0 0-2.500-3z"/></svg></button>'
		: '<button class="post">Post</button>';
	return `<button class="act">${t.act}</button><button class="solo">S</button>${last}${meter}`;
}

fill('tracks', tracks.map((t, i) => `
	<div class="track ${i === 0 ? 'first' : ''}">
		<div class="name ${t.look}"><button class="launch" aria-label="${t.name}"><svg width="9" height="9"><path d="M2 0l7 4.500L2 9z"/></svg></button>${t.name}</div>
		<div class="io">${t.look === 'dark'
			? '<select aria-label="Master output"><option>1/2</option></select>'
			: `<input aria-label="${t.name} routing">`}</div>
		<div class="mix">${mixer(t)}</div>
		<div class="delay"><input value="0.00" aria-label="${t.name} delay"><button>ms</button></div>
	</div>`).join(''));

// arrangement rulers
fill('bar-ruler', range(17).map(i => `<span>${i * 4 + 1}</span>`).join(''));
fill('time-ruler', range(13).map(i => {
	const s = i * 10;
	return `<span>${Math.floor(s / 60)}:${String(s % 60).padStart(2, '0')}</span>`;
}).join(''));
fill('bar-grid', '<i></i>'.repeat(66));
fill('markers', range(4).map(i => `<div class="marker" style="left: calc(100% * ${i * 8} / var(--bars))"><svg width="10" height="12"><path d="M0 0l9 6-9 6"/></svg>${i + 1}</div>`).join(''));

// piano roll
fill('beat-ruler', range(32).map(i => {
	const bar = Math.floor(i / 4) + 1;
	const beat = i % 4 + 1;
	return `<span>${beat === 1 ? bar : bar + '.' + beat}</span>`;
}).join(''));

fill('octaves', range(8).map(i => `<span>C${5 - i}</span>`).join(''));

const pitches = range(ROWS).map(i => (ROWS - 1 - i) % 12);
fill('keys', pitches.map(p => `<i class="${BLACK.includes(p) ? 'black' : (p === 0 || p === 5 ? 'split' : '')}"></i>`).join(''));
fill('rows', pitches.map(p => `<i class="${BLACK.includes(p) ? 'black' : ''}"></i>`).join(''));

const cells = '<i></i>'.repeat(8);
fill('bars', notes.map(() => `<div class="bar">${cells}</div>`).join(''));
fill('notes', notes.map((n, i) => `<div class="note ${i < 2 ? 'selected' : ''}" style="grid-area: ${ROWS - 48 - n} / ${i + 1}"></div>`).join(''));
fill('velocity', notes.map((n, i) => `<div class="bar">${cells}<b class="stick ${i < 2 ? 'selected' : ''}"></b>${i === 7 ? '<span class="grid-size">1/8</span>' : ''}</div>`).join(''));
fill('insert', notes.map((n, i) => `<span>${i < 2 ? '<svg width="9" height="11"><path d="M.5.5h8V7l-4 4-4-4z"/></svg>' : ''}</span>`).join(''));
```
